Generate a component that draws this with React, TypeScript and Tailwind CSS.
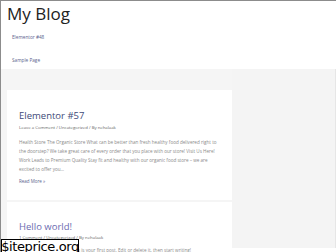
import React from "react";

export default function App() {
  const font = { fontFamily: '"Open Sans", "Noto Sans", sans-serif' };
  return (
    <div
      className="relative w-[336px] h-[252px] overflow-hidden bg-white border-t border-l border-[#8c8c8c]"
      style={font}
    >
      {/* Header */}
      <div className="h-[68px] bg-white pl-[6px] pt-[2px]">
        <div className="text-[17px] leading-[22px] text-[#222]">My Blog</div>
        <div className="pl-[5px] pt-[8px] text-[4.7px] leading-[8px] text-[#5c5f8e]">Elementor #48</div>
        <div className="pl-[5px] pt-[15px] text-[4.7px] leading-[8px] text-[#5c5f8e]">Sample Page</div>
      </div>
      {/* Body */}
      <div className="flex h-[183px] bg-[#f5f5f5]">
        <div className="w-[231px] pl-[6px] pt-[21px] flex flex-col gap-[2px]">
          <div className="bg-white h-[110px] shrink-0 px-[12px] pt-[19px]">
            <div className="text-[9.5px] leading-[13px] text-[#3e4a78]">Elementor #57</div>
            <div className="pt-[2px] text-[4.3px] leading-[6px] text-[#666]">
              Leave a Comment / Uncategorized / By nehalaak
            </div>
            <div className="pt-[8px] text-[4.6px] leading-[9px] text-[#8a8a8a] whitespace-nowrap">
              <div>Health Store The Organic Store What can be better than fresh healthy food delivered right to</div>
              <div>the doorstep? We take great care of every order that you place with our store! Visit Us Here!</div>
              <div>Work Leads to Premium Quality Stay fit and healthy with our organic food store – we are</div>
              <div>excited to offer you…</div>
            </div>
            <div className="pt-[4px] text-[4.5px] leading-[6px] text-[#5c5f8e]">Read More »</div>
          </div>
          <div className="bg-white flex-1 min-h-0 overflow-hidden px-[12px] pt-[18px]">
            <div className="text-[9.5px] leading-[13px] text-[#6b6bb0]">Hello world!</div>
            <div className="pt-[1px] text-[4.3px] leading-[6px] text-[#666]">
              <span className="underline">1 Comment</span> / <span className="underline">Uncategorized</span> / By nehalaak
            </div>
            <div className="pt-[6px] text-[4.6px] leading-[9px] text-[#8a8a8a] whitespace-nowrap">
              Welcome to WordPress. This is your first post. Edit or delete it, then start writing!
            </div>
          </div>
        </div>
        <div className="flex-1 flex flex-col">
          <div className="flex-1 bg-[#f4f4f4] border-r border-[#e6e6e6]" />
          <div className="h-[4px] bg-white" />
        </div>
      </div>
      {/* Watermark */}
      <div
        className="absolute z-50 left-0 top-[238px] w-[78px] h-[14px] bg-white border border-black flex items-center justify-center text-[13px] leading-[13px] tracking-[-0.4px] text-black"
        style={{ fontFamily: '"DejaVu Sans", sans-serif' }}
      >
        $iteprice.org
      </div>
    </div>
  );
}
